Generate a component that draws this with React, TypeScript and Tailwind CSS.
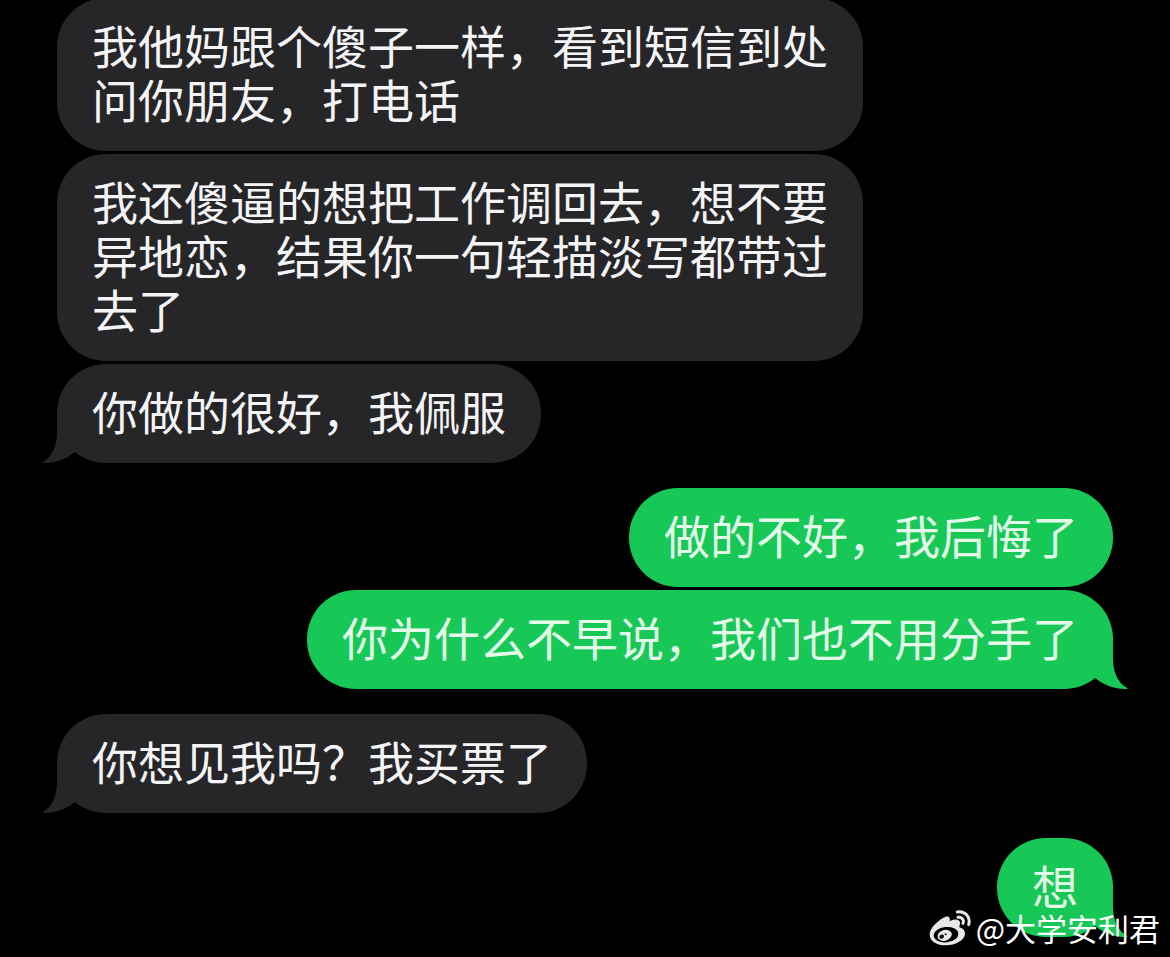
type Side = "in" | "out";

interface Message {
  side: Side;
  text: string;
  tail?: boolean;
}

const groups: Message[][] = [
  [
    { side: "in", text: "我他妈跟个傻子一样，看到短信到处问你朋友，打电话" },
    { side: "in", text: "我还傻逼的想把工作调回去，想不要异地恋，结果你一句轻描淡写都带过去了" },
    { side: "in", text: "你做的很好，我佩服", tail: true },
  ],
  [
    { side: "out", text: "做的不好，我后悔了" },
    { side: "out", text: "你为什么不早说，我们也不用分手了", tail: true },
  ],
  [{ side: "in", text: "你想见我吗？我买票了", tail: true }],
  [{ side: "out", text: "想", tail: true }],
];

function Tail({ side }: { side: Side }) {
  return (
    <svg
      aria-hidden="true"
      viewBox="0 0 50 52"
      className={
        side === "in"
          ? "absolute bottom-0 -left-[15px] h-[52px] w-[50px] fill-[#262629]"
          : "absolute -right-[15px] bottom-0 h-[52px] w-[50px] -scale-x-100 fill-[#18c857]"
      }
    >
      <path d="M15 0V22C15 35 10 46 1 51C0 52 1 52 3 52C14 52 24 48 33 41L50 20V0Z" />
    </svg>
  );
}

function WeiboLogo() {
  return (
    <svg aria-hidden="true" viewBox="0 0 126 108" className="h-[36px] w-[42px]">
      <path
        fill="#e8e8e8"
        d="M42 24C55 15 66 19 62 34C74 26 90 26 93 36C94 42 91 47 91 52C102 55 109 62 108 73C105 92 79 106 51 106C24 106 2 94 2 74C2 56 22 36 42 24Z"
      />
      <ellipse cx="51" cy="74" rx="37" ry="23" fill="#000" transform="rotate(-6 51 74)" />
      <ellipse cx="47" cy="76" rx="22" ry="16" fill="#e8e8e8" transform="rotate(-18 47 76)" />
      <ellipse cx="38" cy="80" rx="7" ry="6" fill="#000" transform="rotate(-20 38 80)" />
      <circle cx="50" cy="73" r="3" fill="#000" />
      <path
        d="M85 6C107 2 126 20 119 44M87 22C98 20 106 29 102 40"
        fill="none"
        stroke="#e8e8e8"
        strokeWidth="9"
        strokeLinecap="round"
      />
    </svg>
  );
}

function Bubble({ message }: { message: Message }) {
  const { side, text, tail } = message;
  return (
    <li
      className={
        side === "in"
          ? "relative w-fit max-w-[806px] self-start rounded-[49px] bg-[#262629] px-[35px] pt-[19px] pb-[26px] text-[#f4f4f6]"
          : "relative w-fit max-w-[806px] self-end rounded-[49px] bg-[#18c857] px-[35px] pt-[19px] pb-[26px] text-[#e4fbea]"
      }
    >
      {tail && <Tail side={side} />}
      <p className="relative">{text}</p>
    </li>
  );
}

export default function App() {
  return (
    <main className="relative min-h-screen overflow-hidden bg-black font-['Noto_Sans_CJK_SC',sans-serif]">
      <div className="-mt-[2px] flex flex-col gap-[25px] px-[57px] pb-5 text-[46px] leading-[54px]">
        {groups.map((group, i) => (
          <ul key={i} className="flex flex-col gap-[3px]">
            {group.map((message) => (
              <Bubble key={message.text} message={message} />
            ))}
          </ul>
        ))}
      </div>
      <div className="absolute right-[10px] bottom-[9px] flex items-center gap-[5px] text-white">
        <WeiboLogo />
        <span className="text-[31px] leading-[40px]">@大学安利君</span>
      </div>
    </main>
  );
}
